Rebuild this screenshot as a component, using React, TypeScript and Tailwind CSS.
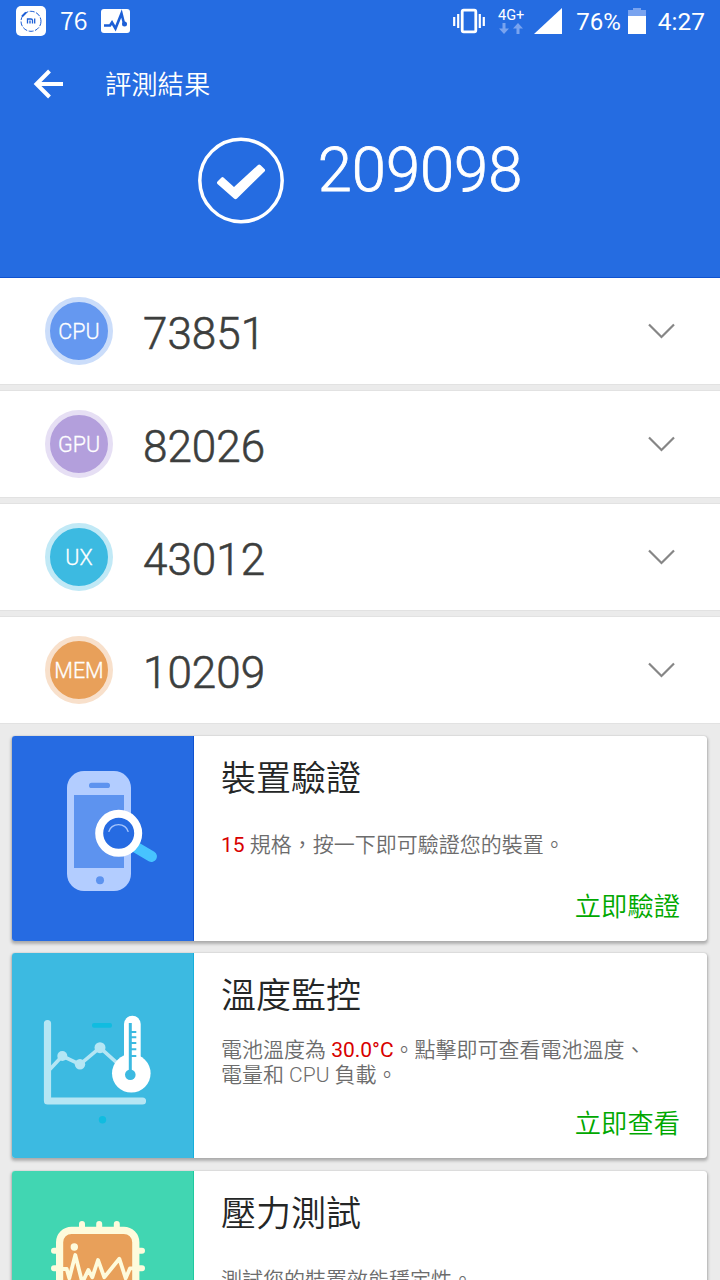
import type { ReactNode } from "react";

const scores = [
  { name: "CPU", value: "73851", color: "bg-[#6598f0] border-[#cbddfa]" },
  { name: "GPU", value: "82026", color: "bg-[#b39fdc] border-[#e6dff4]" },
  { name: "UX", value: "43012", color: "bg-[#3cbae1] border-[#c1e9f6]" },
  { name: "MEM", value: "10209", color: "bg-[#e8a05a] border-[#f8e0cb]" },
];

const StatusBar = () => {
  return (
    <div className="flex h-[42px] items-center justify-between pr-[15px] pl-4 text-white">
      <div className="flex items-center">
        <svg width="30" height="30" viewBox="0 0 30 30">
          <rect width="30" height="30" rx="5" fill="#fff" />
          <circle cx="15" cy="15.3" r="10" fill="none" stroke="#1d5fd6" strokeWidth="1" strokeDasharray="5 1.5" />
          <path d="M6 10.5l4-4" stroke="#1d5fd6" strokeWidth="2" />
          <path d="M11.5 17.500v-4.500h3.500q1.500 0 1.500 1.500v3M14 14.500v3M18.700 12.500v5" fill="none" stroke="#1d5fd6" strokeWidth="1.300" />
        </svg>
        <span className="ml-[14px] -mt-[3px] text-[25px] leading-none font-[350] font-['Noto_Sans_CJK_TC',sans-serif]">76</span>
        <svg className="ml-[14px]" width="29" height="24" viewBox="0 0 29 24">
          <rect width="29" height="24" rx="3" fill="#fff" />
          <path d="M3 16.500h6l2-3 3.500 6L20.500 4.500l2.500 10" fill="none" stroke="#1d5fd6" strokeWidth="2.600" />
          <circle cx="23.500" cy="15" r="2.500" fill="#1d5fd6" />
        </svg>
      </div>
      <div className="flex items-center">
        <svg width="32" height="26" viewBox="0 0 32 26">
          <rect x="9.200" y="2.200" width="13.600" height="21.600" rx="1.500" fill="none" stroke="#fff" strokeWidth="2.800" />
          <path d="M1.200 9v9M5.200 6v14M26.800 6v14M30.800 9v9" stroke="#fff" strokeWidth="2.200" />
        </svg>
        <div className="ml-3 flex w-[28px] flex-col items-center">
          <span className="text-[14.500px] leading-[14px]">4G+</span>
          <svg width="26" height="11" viewBox="0 0 26 11" fill="#79a3ef">
            <path d="M4.500 0h3v5.500h3.500L6 11 1 5.500h3.500zM18.500 11h3V5.500H25L20 0l-5 5.500h3.500z" />
          </svg>
        </div>
        <svg className="ml-[9px]" width="28" height="26" viewBox="0 0 28 26">
          <path d="M0 26L28 0v26z" fill="#fff" />
        </svg>
        <span className="ml-[14px] pt-[2px] text-[24px] leading-none">76%</span>
        <svg className="ml-[7px]" width="18" height="26" viewBox="0 0 18 26">
          <path d="M5 0h8v2h5v6H0V2h5z" fill="#79a3ef" />
          <path d="M0 8h18v18H0z" fill="#fff" />
        </svg>
        <span className="ml-[12px] pt-[2px] text-[24.5px] leading-none">4:27</span>
      </div>
    </div>
  );
};

const PhoneIcon = () => (
  <svg width="182" height="205" viewBox="0 0 182 205">
    <rect x="55" y="35" width="64" height="120" rx="17" fill="#b3cdff" />
    <rect x="62" y="59" width="50" height="73" fill="#5d93ef" />
    <rect x="77" y="46.700" width="21" height="5.300" rx="2.600" fill="#5d93ef" />
    <circle cx="88" cy="144.300" r="4" fill="#5d93ef" />
    <path d="M120 109l19.500 11.500" stroke="#47c4ff" strokeWidth="11" strokeLinecap="round" />
    <circle cx="106.700" cy="97.300" r="19.500" fill="#266be2" stroke="#fff" strokeWidth="8" />
    <path d="M96.700 95.800a10 9 0 0 1 19.600 0" fill="none" stroke="#a5c4fb" strokeWidth="1.400" />
  </svg>
);

const ThermometerIcon = () => (
  <svg width="182" height="205" viewBox="0 0 182 205">
    <path d="M35.500 70.500v77.500h95" fill="none" stroke="#b5e6f4" strokeWidth="7.200" strokeLinecap="round" strokeLinejoin="round" />
    <path d="M38 116.300L50.300 103 68 111.300 88 94.700l20 18" fill="none" stroke="#b5e6f4" strokeWidth="3.600" />
    <g fill="#b5e6f4">
      <circle cx="50.300" cy="103" r="5" />
      <circle cx="68" cy="111.300" r="5.200" />
      <circle cx="88" cy="94.700" r="5.500" />
    </g>
    <rect x="80" y="70" width="20" height="4.700" rx="2" fill="#10bce0" />
    <circle cx="90.500" cy="166.700" r="3.700" fill="#10bce0" />
    <rect x="112" y="62.700" width="16.700" height="50" rx="8.300" fill="#fff" />
    <circle cx="119.300" cy="120.300" r="19.300" fill="#fff" />
    <path d="M118.300 70v50" stroke="#3cbae1" strokeWidth="3" />
    <path d="M118.300 79h6M118.300 84.300h6M118.300 90h6M118.300 96.300h6M118.300 103h6" stroke="#3cbae1" strokeWidth="2" />
    <circle cx="118.300" cy="121.700" r="5.300" fill="#3cbae1" />
  </svg>
);

const ChipIcon = () => (
  <svg width="182" height="205" viewBox="0 0 182 205">
    <g stroke="#fefbdc" strokeWidth="6" strokeLinecap="round">
      <path d="M70 53v95M87.200 53v95M104.800 53v95" />
      <path d="M42 79.700h88M42 97.300h88M42 115h88" />
    </g>
    <rect x="47.600" y="59.300" width="76.200" height="76" rx="12" fill="#e8a05a" stroke="#fefbdc" strokeWidth="7.200" />
    <circle cx="62.300" cy="76" r="3.700" fill="#fefbdc" />
    <path
      d="M51 98h3.700l2.600 9.300L63.300 84l7 27.700 6-12.700 4 7.300L86 89l6.300 17.300 15-18.600 6.400 19.600 4.300-10h3.300"
      fill="none"
      stroke="#fefbdc"
      strokeWidth="3.800"
      strokeLinejoin="round"
    />
  </svg>
);

type CardProps = {
  icon: ReactNode;
  color: string;
  title: string;
  action: string;
  descClass: string;
  children: ReactNode;
};

const Card = ({ icon, color, title, action, descClass, children }: CardProps) => {
  return (
    <div className="flex h-[205px] shrink-0 overflow-hidden rounded-[3px] bg-white shadow-[0_2px_3px_1px_rgba(0,0,0,0.25),0_0_1px_rgba(0,0,0,0.25)]">
      <div className={`w-[182px] shrink-0 border-r ${color}`}>{icon}</div>
      <div className="flex flex-1 flex-col pt-[22px] pr-[27px] pb-[15px] pl-[27px]">
        <h2 className="text-[35px] leading-[44px] font-[350] text-[#242626]">{title}</h2>
        <p className={`text-[21px] leading-[25px] font-[350] whitespace-nowrap text-[#6c6c6c] ${descClass}`}>{children}</p>
        <button className="mt-auto self-end text-[26.3px] leading-[38px] font-[350] text-[#00a800]">{action}</button>
      </div>
    </div>
  );
};

const App = () => {
  return (
    <div className="flex h-[1280px] w-[720px] flex-col overflow-hidden bg-[#ebebeb] font-[Roboto,'Noto_Sans_CJK_TC',sans-serif]">
      <header className="relative z-10 h-[278px] shrink-0 border-b border-[#0f52d0] bg-[#256ce1] text-white">
        <StatusBar />
        <div className="flex h-[84px] items-center pl-[33px]">
          <svg width="30" height="30" viewBox="0 0 30 30">
            <path d="M16.500 2L3.500 15l13 13M3 15h27" fill="none" stroke="#fff" strokeWidth="4" />
          </svg>
          <h1 className="ml-[42px] pt-[3px] text-[26.3px] leading-none font-[350]">評測結果</h1>
        </div>
        <div className="flex items-start justify-center">
          <svg className="mt-[11px]" width="86" height="88" viewBox="0 0 86 88">
            <circle cx="43" cy="43.500" r="41.200" fill="none" stroke="#fff" strokeWidth="3.500" />
            <path
              d="M19.500 44.500L23.500 40.500Q24.500 39.500 25.500 40.500L36 50 60 28Q61.200 27 62.400 28L66.500 32Q67.700 33.200 66.500 34.500L39 61.500Q37.500 63 36 61.500L19.500 47Q18.300 45.800 19.500 44.500z"
              fill="#fff"
            />
          </svg>
          <span className="ml-[34px] text-[61.5px] leading-[89px] font-light [-webkit-text-stroke:0.8px]">209098</span>
        </div>
      </header>

      <div className="flex shrink-0 flex-col gap-[7px]">
        {scores.map((score) => (
          <div
            key={score.name}
            className="flex h-[106px] items-center bg-white pr-[44px] pl-[45px] shadow-[0_0_0_1px_#e2e2e2]"
          >
            <div
              className={`flex size-[68px] items-center justify-center rounded-full border-[5px] pt-[2px] text-[21.5px] leading-none font-light text-white [-webkit-text-stroke:0.3px] ${score.color}`}
            >
              {score.name}
            </div>
            <span className="ml-[30px] pt-[6px] text-[44px] leading-none font-light text-[#3c3e3d] [-webkit-text-stroke:0.6px]">
              {score.value}
            </span>
            <svg className="ml-auto" width="29" height="18" viewBox="0 0 29 18">
              <path d="M2 2.500l12.500 12.500L27 2.500" fill="none" stroke="#868686" strokeWidth="2.200" />
            </svg>
          </div>
        ))}
      </div>

      <div className="flex flex-col gap-[12.4px] pt-[13px] pr-[13px] pl-3">
        <Card icon={<PhoneIcon />} color="bg-[#266be2] border-[#0f52d0]" title="裝置驗證" action="立即驗證" descClass="mt-[31px]">
          <span className="font-normal text-[#d80000]">15</span> 規格，按一下即可驗證您的裝置。
        </Card>
        <Card icon={<ThermometerIcon />} color="bg-[#3cbae1] border-[#17aedb]" title="溫度監控" action="立即查看" descClass="mt-[18.5px]">
          電池溫度為 <span className="font-normal text-[#d80000]">30.0°C</span>。點擊即可查看電池溫度、
          <br />
          電量和 CPU 負載。
        </Card>
        <Card icon={<ChipIcon />} color="bg-[#41d6b2] border-[#1fc9a0]" title="壓力測試" action="立即測試" descClass="mt-[31px]">
          測試您的裝置效能穩定性。
        </Card>
      </div>
    </div>
  );
};

export default App;
